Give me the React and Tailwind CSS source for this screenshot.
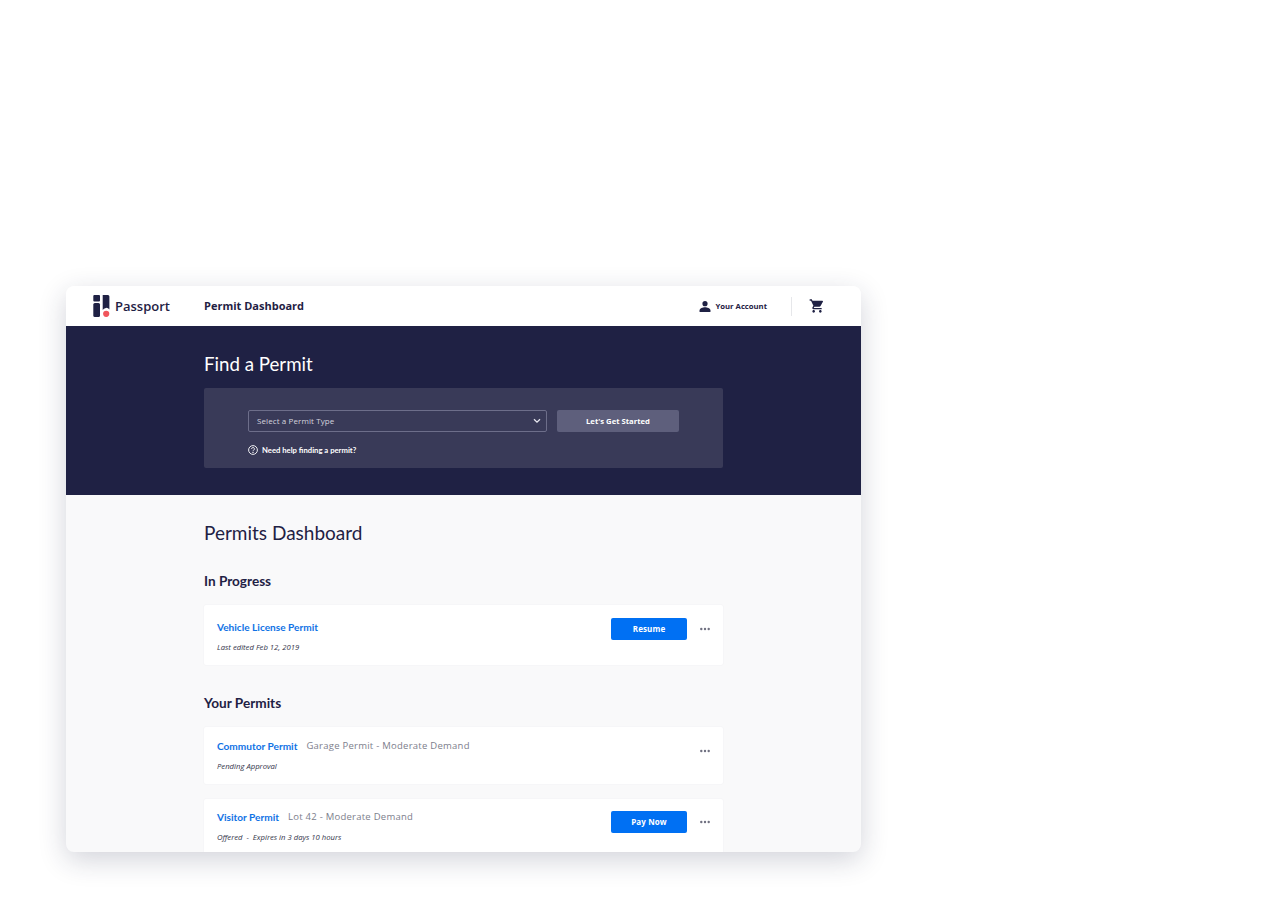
import React from "react";

const Dots = () => (
  <svg width="10" height="4" viewBox="0 0 10 4" className="block">
    <circle cx="1.3" cy="2" r="1.2" fill="#6f7080" />
    <circle cx="5" cy="2" r="1.2" fill="#6f7080" />
    <circle cx="8.7" cy="2" r="1.2" fill="#6f7080" />
  </svg>
);

const Logo = () => (
  <svg width="17" height="22" viewBox="0 0 17 22" className="block">
    <rect x="0.3" y="0" width="6.7" height="6.6" rx="1" fill="#1f2144" />
    <rect x="0.3" y="8" width="6.7" height="14" rx="1.5" fill="#1f2144" />
    <path d="M9.7 0h5.2a1.5 1.5 0 0 1 1.5 1.5v13a3.9 3.9 0 0 0-6.7.6z" fill="#1f2144" />
    <circle cx="13.2" cy="18.8" r="3.1" fill="#f0565c" />
  </svg>
);

const Btn = ({ children }) => (
  <button className="w-[76px] h-[22px] rounded-[2px] bg-[#0070f3] text-white text-[8px] font-bold tracking-[0.1px] font-['Open_Sans',sans-serif] flex items-center justify-center">
    {children}
  </button>
);

const Title = ({ children }) => (
  <span className="text-[10.1px] leading-[14px] font-bold text-[#0f72e5] font-['Lato',sans-serif]">{children}</span>
);
const Sub = ({ children }) => (
  <span className="text-[9.5px] leading-[14px] tracking-[0.25px] text-[#7d7e8c] font-['Open_Sans',sans-serif]">{children}</span>
);
const Note = ({ children }) => (
  <div className="text-[7.7px] leading-[12px] italic text-[#33344a] whitespace-pre font-['Open_Sans',sans-serif]">{children}</div>
);

export default function App() {
  return (
    <div className="w-[1280px] h-[900px] bg-white pl-[66px] pt-[286px] overflow-hidden">
      <div className="w-[795px] h-[566px] rounded-[8px] overflow-hidden bg-[#f9f9fa] shadow-[0_8px_28px_rgba(31,33,68,0.2)] flex flex-col">
        <header className="h-[40px] shrink-0 bg-white flex items-center">
          <div className="w-[138px] pl-[27px] flex items-center gap-[5px] shrink-0">
            <Logo />
            <span className="text-[13px] font-semibold text-[#1f2144] font-['Open_Sans',sans-serif] leading-none">Passport</span>
          </div>
          <div className="text-[11px] font-bold text-[#1f2144] font-['Open_Sans',sans-serif]">Permit Dashboard</div>
          <div className="ml-auto flex items-center">
            <svg width="12" height="11" viewBox="0 0 13 12" className="block" preserveAspectRatio="none">
              <circle cx="6.5" cy="2.9" r="2.8" fill="#1f2144" />
              <path d="M0.6 12v-1.6c0-2.3 3.6-3.5 5.9-3.5s5.9 1.2 5.9 3.5v1.6z" fill="#1f2144" />
            </svg>
            <span className="ml-[4px] pt-[1px] text-[7.7px] font-bold text-[#1f2144] font-['Open_Sans',sans-serif]">Your Account</span>
            <div className="ml-[24px] w-px h-[19px] bg-[#e6e7ea]" />
            <svg width="16" height="16" viewBox="0 0 24 24" className="block ml-[17px] mr-[36px]">
              <path fill="#1f2144" d="M7 18c-1.1 0-1.99.9-1.99 2S5.9 22 7 22s2-.9 2-2-.9-2-2-2zM1 2v2h2l3.6 7.59-1.35 2.45c-.16.28-.25.61-.25.96 0 1.1.9 2 2 2h12v-2H7.42c-.14 0-.25-.11-.25-.25l.03-.12.9-1.63h7.45c.75 0 1.41-.41 1.75-1.03l3.58-6.49c.08-.14.12-.31.12-.48 0-.55-.45-1-1-1H5.21l-.94-2H1zm16 16c-1.1 0-1.99.9-1.99 2s.89 2 1.99 2 2-.9 2-2-.9-2-2-2z" />
            </svg>
          </div>
        </header>

        <section className="h-[169px] shrink-0 bg-[#1f2144] pl-[138px] pt-[25px]">
          <h1 className="text-[18.7px] leading-[26px] text-white font-['Lato',sans-serif]">Find a Permit</h1>
          <div className="mt-[11px] w-[519px] h-[80px] rounded-[2px] bg-[#393a58] pl-[44px] pt-[22px]">
            <div className="flex gap-[10px]">
              <div className="w-[299px] h-[22px] rounded-[2px] border border-[#6d6e8a] pl-[8px] pr-[5px] flex items-center justify-between">
                <span className="text-[8px] tracking-[0.1px] text-[#d4d4de] font-['Open_Sans',sans-serif]">Select a Permit Type</span>
                <svg width="8" height="6" viewBox="0 0 8 6" className="block" fill="none" stroke="#e6e6ee" strokeWidth="1.3">
                  <path d="M1 1.2l3 3 3-3" />
                </svg>
              </div>
              <button className="w-[122px] h-[22px] pt-[1px] rounded-[2px] bg-[#5e5f7c] text-white text-[7.7px] font-bold font-['Open_Sans',sans-serif] flex items-center justify-center">
                Let's Get Started
              </button>
            </div>
            <div className="mt-[12px] flex items-center gap-[4px]">
              <svg width="10" height="10" viewBox="0 0 10 10" className="block" fill="none" stroke="#fff" strokeWidth="0.9">
                <circle cx="5" cy="5" r="4.4" />
                <path d="M3.6 3.9a1.4 1.4 0 1 1 2.1 1.2c-.5.3-.7.5-.7 1" />
                <circle cx="5" cy="7.3" r="0.3" fill="#fff" />
              </svg>
              <span className="text-[7.7px] leading-[12px] font-bold text-white font-['Lato',sans-serif]">Need help finding a permit?</span>
            </div>
          </div>
        </section>

        <main className="flex-1 min-h-0 pl-[138px] pt-[25px] w-[657px]">
          <h2 className="text-[19px] leading-[26px] text-[#1f2144] font-['Lato',sans-serif]">Permits Dashboard</h2>
          <h3 className="mt-[26px] text-[13.6px] leading-[18px] font-bold text-[#1f2144] font-['Lato',sans-serif]">In Progress</h3>
          <div className="mt-[15px] h-[60px] rounded-[2px] bg-white px-[13px] shadow-[0_0_2px_rgba(31,33,68,0.06)] flex items-start justify-between">
            <div className="flex flex-col gap-[7px] pt-[15px]">
              <Title>Vehicle License Permit</Title>
              <Note>Last edited Feb 12, 2019</Note>
            </div>
            <div className="flex items-center gap-[13px] pt-[13px]">
              <Btn>Resume</Btn>
              <Dots />
            </div>
          </div>

          <h3 className="mt-[29px] text-[13.6px] leading-[18px] font-bold text-[#1f2144] font-['Lato',sans-serif]">Your Permits</h3>
          <div className="mt-[15px] h-[57px] rounded-[2px] bg-white px-[13px] shadow-[0_0_2px_rgba(31,33,68,0.06)] flex items-start justify-between">
            <div className="flex flex-col gap-[7px] pt-[12px]">
              <div className="flex items-center gap-[9px]">
                <Title>Commutor Permit</Title>
                <Sub>Garage Permit - Moderate Demand</Sub>
              </div>
              <Note>Pending Approval</Note>
            </div>
            <div className="pt-[22px]">
              <Dots />
            </div>
          </div>
          <div className="mt-[15px] h-[60px] rounded-[2px] bg-white px-[13px] shadow-[0_0_2px_rgba(31,33,68,0.06)] flex items-start justify-between">
            <div className="flex flex-col gap-[7px] pt-[11px]">
              <div className="flex items-center gap-[9px]">
                <Title>Visitor Permit</Title>
                <Sub>Lot 42 - Moderate Demand</Sub>
              </div>
              <Note>{"Offered  -  Expires in 3 days 10 hours"}</Note>
            </div>
            <div className="flex items-center gap-[13px] pt-[12px]">
              <Btn>Pay Now</Btn>
              <Dots />
            </div>
          </div>
        </main>
      </div>
    </div>
  );
}
